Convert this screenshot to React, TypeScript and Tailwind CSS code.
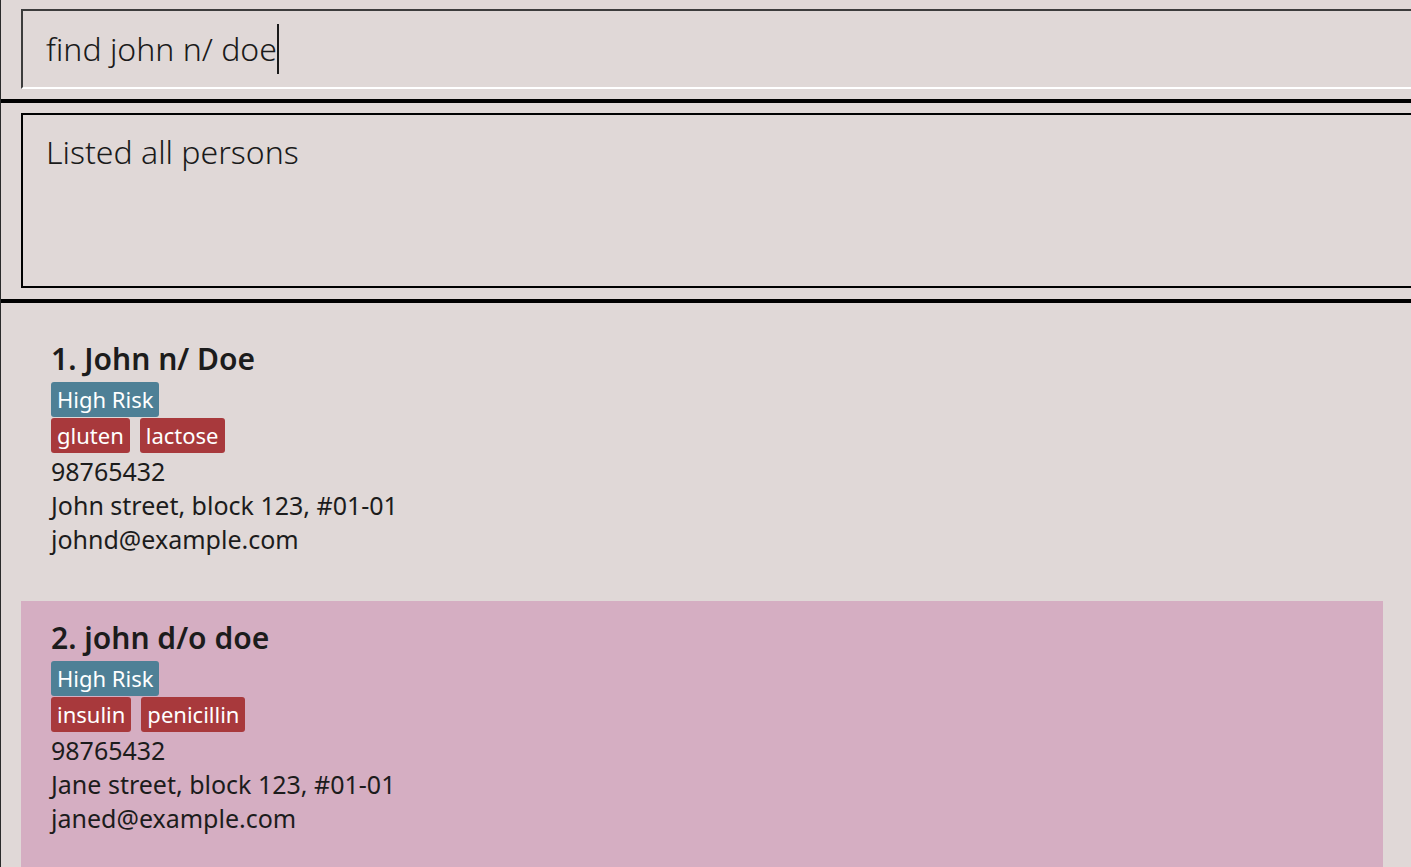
import React from "react";

type Person = {
  name: string;
  risk: string;
  tags: string[];
  phone: string;
  address: string;
  email: string;
};

const persons: Person[] = [
  {
    name: "John n/ Doe",
    risk: "High Risk",
    tags: ["gluten", "lactose"],
    phone: "98765432",
    address: "John street, block 123, #01-01",
    email: "johnd@example.com",
  },
  {
    name: "john d/o doe",
    risk: "High Risk",
    tags: ["insulin", "penicillin"],
    phone: "98765432",
    address: "Jane street, block 123, #01-01",
    email: "janed@example.com",
  },
];

const font = { fontFamily: '"Noto Sans", "Open Sans", sans-serif' };

function PersonCard({ p, index, selected }: { p: Person; index: number; selected?: boolean }) {
  return (
    <div
      className={`h-[279px] shrink-0 pl-[30px] pt-[17px] ${selected ? "bg-[#d5aec2]" : ""}`}
    >
      <div className="text-[30px] leading-[40px] font-semibold text-[#1c1c1c]">
        {index}. {p.name}
      </div>
      <div className="flex mt-[3px]">
        <span className="bg-[#4e8096] text-white text-[22px] leading-[35px] px-[6px] rounded-[3px]">
          {p.risk}
        </span>
      </div>
      <div className="flex gap-[10px] mt-[1px]">
        {p.tags.map((t) => (
          <span
            key={t}
            className="bg-[#a8393c] text-white text-[22px] leading-[35px] px-[6px] rounded-[3px]"
          >
            {t}
          </span>
        ))}
      </div>
      <div className="text-[25px] leading-[34px] text-[#1c1c1c] mt-[1px]">
        <div>{p.phone}</div>
        <div>{p.address}</div>
        <div>{p.email}</div>
      </div>
    </div>
  );
}

export default function App() {
  return (
    <div
      className="w-[1411px] h-[867px] overflow-hidden bg-[#e0d8d7] border-l border-[#2a2a2a] flex flex-col"
      style={font}
    >
      {/* command box */}
      <div className="h-[99px] shrink-0 pt-[9px] pl-[20px]">
        <div className="h-[80px] w-[1420px] border-t-2 border-l-2 border-[#3c3c3c] border-b-2 border-b-white pl-[23px] flex items-center">
          <span className="text-[32px] font-light text-[#1a1a1a] leading-[50px] border-r-2 border-[#1a1a1a]">
            find john n/ doe
          </span>
        </div>
      </div>
      <div className="h-[4px] shrink-0 bg-black" />

      {/* result display */}
      <div className="h-[196px] shrink-0 pt-[10px] pl-[20px]">
        <div className="h-[175px] w-[1420px] border-2 border-black pl-[23px] pt-[14px]">
          <div className="text-[32px] font-light text-[#1a1a1a] leading-[46px]">
            Listed all persons
          </div>
        </div>
      </div>
      <div className="h-[4px] shrink-0 bg-black" />

      {/* person list */}
      <div className="pl-[20px] pt-[19px] w-[1382px] shrink-0">
        {persons.map((p, i) => (
          <PersonCard key={p.email} p={p} index={i + 1} selected={i === 1} />
        ))}
      </div>
    </div>
  );
}
